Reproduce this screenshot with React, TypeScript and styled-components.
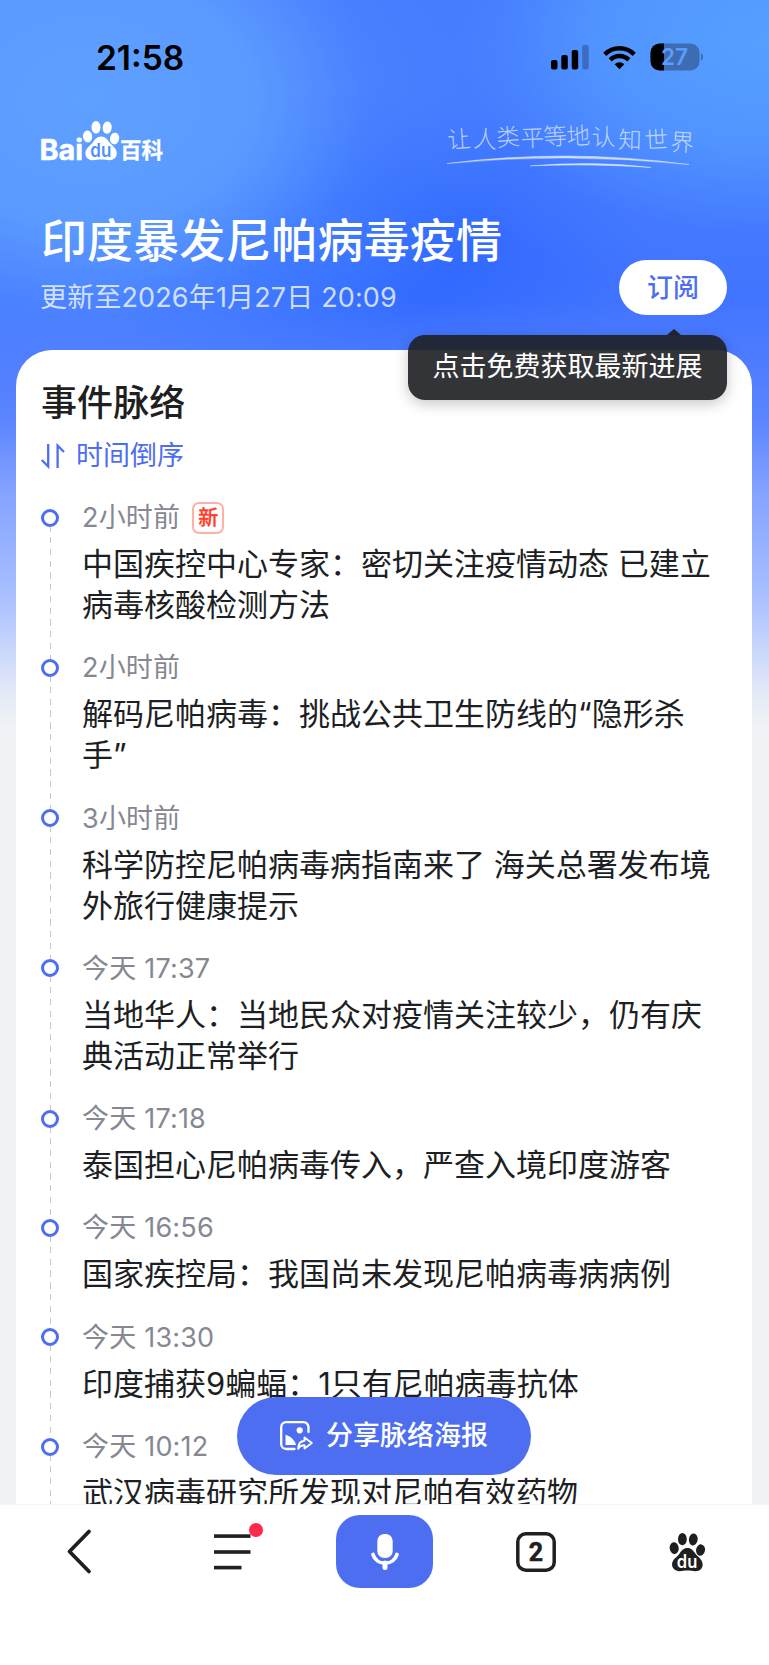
import React from "react";
import styled, { createGlobalStyle } from "styled-components";

const cjk = `Inter, "Noto Sans CJK SC", sans-serif`;
const blue = "#4e6ef2";

const GlobalStyle = createGlobalStyle`
  *, *::before, *::after { box-sizing: border-box; }
  body { margin: 0; background: #fff; font-family: ${cjk}; }
  h1, h2, p, ul { margin: 0; padding: 0; font-weight: inherit; }
  button { border: 0; padding: 0; background: none; font: inherit; color: inherit; }
  svg { display: block; overflow: visible; }
`;

const Screen = styled.div`
  width: 769px;
  height: 1665px;
  overflow: hidden;
  display: flex;
  flex-direction: column;
`;

const Page = styled.main`
  flex: none;
  height: 1504px;
  overflow: hidden;
  display: flex;
  flex-direction: column;
  background:
    linear-gradient(180deg, rgba(91, 132, 255, 0) 300px, rgba(91, 132, 255, 1) 420px, #86a4ff 495px, #a6bdff 590px, #ccd9fb 655px, #e5eaf7 695px, #f1f2f5 728px),
    radial-gradient(430px 330px at 90px 100px, rgba(94, 160, 255, 1) 0%, rgba(92, 156, 255, 0.95) 38%, rgba(80, 140, 255, 0.5) 66%, rgba(66, 120, 255, 0) 100%),
    radial-gradient(420px 260px at 769px 40px, rgba(86, 160, 255, 1) 0%, rgba(84, 154, 255, 0.85) 40%, rgba(72, 130, 255, 0.35) 75%, rgba(64, 115, 255, 0) 100%),
    radial-gradient(300px 160px at 350px 250px, #326aff 0%, #3069ff 30%, rgba(50, 106, 255, 0) 100%),
    #4174ff;
`;

const StatusBar = styled.div`
  flex: none;
  height: 114px;
  padding: 0 65px 0 96px;
  display: flex;
  align-items: center;
  justify-content: space-between;
  color: #000;
`;

const Clock = styled.span`
  padding-top: 1px;
  font-size: 33.5px;
  font-weight: 600;
`;

const StatusIcons = styled.div`
  display: flex;
  align-items: center;
  gap: 14px;
`;

const Brand = styled.div`
  flex: none;
  height: 62px;
  padding: 0 73px 0 40px;
  display: flex;
  align-items: flex-start;
  justify-content: space-between;
`;

const Hero = styled.header`
  flex: none;
  height: 174px;
  padding: 34px 42px 0 41px;
  display: flex;
  justify-content: space-between;
  color: #fff;
`;

const Title = styled.h1`
  font-size: 46px;
  line-height: 60px;
  font-weight: 500;
  letter-spacing: 0.1px;
`;

const Updated = styled.p`
  margin-top: 10px;
  margin-left: -1px;
  font-size: 27px;
  line-height: 36px;
  letter-spacing: 0.15px;
  color: rgba(255, 255, 255, 0.75);
`;

const SubscribeWrap = styled.div`
  position: relative;
  margin-top: 50px;
  width: 108px;
  height: 55px;
`;

const Subscribe = styled.button`
  width: 108px;
  height: 55px;
  border-radius: 28px;
  background: #fff;
  color: ${blue};
  font-size: 26px;
  line-height: 53px;
  font-weight: 500;
`;

const Tooltip = styled.div`
  position: absolute;
  z-index: 2;
  top: 75px;
  right: 0;
  width: 319px;
  height: 65px;
  border-radius: 17px;
  background: rgba(31, 32, 36, 0.91);
  box-shadow: 0 4px 14px rgba(0, 0, 0, 0.22);
  color: #fff;
  font-size: 27px;
  line-height: 64px;
  text-align: center;
  &::before {
    content: "";
    position: absolute;
    top: -6px;
    right: 46px;
    border: 7px solid transparent;
    border-top: 0;
    border-bottom: 6px solid #20232d;
  }
`;

const Card = styled.section`
  flex: none;
  height: 1200px;
  margin: 0 17px 0 16px;
  padding: 31px 25px 0;
  border-radius: 36px 36px 0 0;
  background: #fff;
`;

const CardTitle = styled.h2`
  font-size: 36px;
  line-height: 44px;
  font-weight: 500;
  letter-spacing: 0.1px;
  color: #1f1f1f;
`;

const Sort = styled.div`
  margin-top: 11px;
  height: 40px;
  display: flex;
  align-items: center;
  gap: 11px;
  color: ${blue};
  font-size: 27px;
  line-height: 38px;
`;

const Timeline = styled.ul`
  margin-top: 22.5px;
  list-style: none;
`;

const Item = styled.li`
  display: grid;
  grid-template-columns: 18px 1fr;
  column-gap: 23px;
`;

const Rail = styled.div`
  padding-top: 10px;
  display: flex;
  flex-direction: column;
  align-items: center;
  &::before {
    content: "";
    width: 18px;
    height: 18px;
    border: 3px solid ${blue};
    border-radius: 50%;
  }
  &::after {
    content: "";
    flex: 1;
    width: 1px;
    margin: 0 0 -10px 1px;
    background: repeating-linear-gradient(180deg, #c8c8cc 0 4.6px, transparent 4.6px 10px, #c8c8cc 10px 11.75px);
  }
`;

const Entry = styled.div`
  padding-bottom: 23.8px;
`;

const Time = styled.div`
  height: 38px;
  display: flex;
  align-items: center;
  gap: 12px;
  color: #858892;
  font-size: 27px;
  line-height: 39px;
  letter-spacing: 0.2px;
`;

const NewTag = styled.span`
  width: 32px;
  height: 32px;
  border: 2px solid #ffb0a8;
  border-radius: 7px;
  color: #ff3b26;
  font-size: 20px;
  line-height: 28px;
  font-weight: 500;
  letter-spacing: 0;
  text-align: center;
  -webkit-text-stroke: 0.3px #ff3b26;
`;

const Headline = styled.p`
  margin-top: 6.5px;
  color: #1d1f24;
  font-size: 31px;
  line-height: 41px;
  white-space: pre;
`;

const BottomBar = styled.nav`
  position: relative;
  flex: none;
  height: 161px;
  padding-top: 10px;
  border-top: 1px solid #f5f5f6;
  background: #fff;
  display: grid;
  grid-template-columns: 158px 148px 157px 146px 157px;
  align-items: start;
  justify-items: center;
`;

const NavItem = styled.button`
  position: relative;
  height: 73px;
  display: flex;
  align-items: center;
  justify-content: center;
`;

const RedDot = styled.span`
  position: absolute;
  top: 8px;
  right: -12px;
  width: 14px;
  height: 14px;
  border-radius: 50%;
  background: #ff2849;
`;

const Mic = styled(NavItem)`
  width: 97px;
  border-radius: 24px;
  background: ${blue};
`;

const Share = styled.button`
  position: absolute;
  top: -108px;
  left: 237px;
  width: 294px;
  height: 78px;
  border-radius: 39px;
  background: ${blue};
  color: #fff;
  display: flex;
  align-items: center;
  justify-content: center;
  gap: 13px;
  font-size: 27px;
  line-height: 40px;
  font-weight: 500;
  svg { margin-top: -1px; }
`;

const items: { time: string; text: string; fresh?: boolean }[] = [
  { time: "2小时前", text: "中国疾控中心专家：密切关注疫情动态 已建立\n病毒核酸检测方法", fresh: true },
  { time: "2小时前", text: "解码尼帕病毒：挑战公共卫生防线的“隐形杀\n手”" },
  { time: "3小时前", text: "科学防控尼帕病毒病指南来了 海关总署发布境\n外旅行健康提示" },
  { time: "今天 17:37", text: "当地华人：当地民众对疫情关注较少，仍有庆\n典活动正常举行" },
  { time: "今天 17:18", text: "泰国担心尼帕病毒传入，严查入境印度游客" },
  { time: "今天 16:56", text: "国家疾控局：我国尚未发现尼帕病毒病病例" },
  { time: "今天 13:30", text: "印度捕获9蝙蝠：1只有尼帕病毒抗体" },
  { time: "今天 10:12", text: "武汉病毒研究所发现对尼帕有效药物" },
];

const Signal = () => (
  <svg width="38" height="25" viewBox="0 0 38 25">
    <rect x="0" y="15" width="6.5" height="9.5" rx="2" />
    <rect x="10.3" y="10" width="6.5" height="14.5" rx="2" />
    <rect x="20.7" y="5" width="6.5" height="19.5" rx="2" />
    <rect x="31.2" y="0" width="6.5" height="24.5" rx="2" opacity="0.25" />
  </svg>
);

const Wifi = () => (
  <svg width="33" height="25" viewBox="0 0 34 25" fill="none" stroke="#000" strokeWidth="4.6">
    <path d="M1.8 9.3a21.5 21.5 0 0 1 30.4 0" />
    <path d="M7.4 15a13.6 13.6 0 0 1 19.2 0" />
    <path d="M17 24.6l-5-5.1a7.2 7.2 0 0 1 10 0z" fill="#000" stroke="none" />
  </svg>
);

const Battery = () => (
  <svg width="54" height="28" viewBox="0 0 54 28">
    <defs>
      <clipPath id="charge"><rect x="0" y="0" width="14" height="28" /></clipPath>
    </defs>
    <rect x="0.5" y="0.5" width="49" height="27" rx="9" fill="#3e6cb3" />
    <rect x="0.5" y="0.5" width="49" height="27" rx="9" clipPath="url(#charge)" />
    <path d="M51 10.5c2.8 0.8 2.8 6.2 0 7z" fill="#3e6cb3" />
    <text x="24.5" y="21.8" textAnchor="middle" fontFamily="Inter" fontSize="22.5" fontWeight="600" fill="#5b9dfd">27</text>
  </svg>
);

const Paw = ({ fill, ink }: { fill: string; ink: string }) => (
  <g fill={fill}>
    <ellipse cx="4.6" cy="15.5" rx="4.6" ry="6" transform="rotate(-8 4.6 15.5)" />
    <ellipse cx="13" cy="6.3" rx="4.5" ry="6.3" />
    <ellipse cx="24.2" cy="6.6" rx="4.5" ry="6.2" transform="rotate(8 24.2 6.6)" />
    <ellipse cx="31.6" cy="17.5" rx="4.6" ry="5.9" transform="rotate(10 31.6 17.5)" />
    <path d="M18.2 15.5c4 0 6 2.8 8 5.500 2.600 3.400 7.600 6 7.600 11.300 0 4.300-3.200 6.900-7.200 6.900-3 0-5.200-.6-8.400-.6s-5.300.6-8.200.6c-4.200 0-7.600-2.600-7.600-7 0-5 4.900-7.400 7.600-11 2.100-2.900 4.200-5.700 8.200-5.700z" />
    <text x="17.8" y="36" textAnchor="middle" fontFamily="Inter" fontSize="18.5" fontWeight="600" textLength="21" lengthAdjust="spacingAndGlyphs" fill={ink}>du</text>
  </g>
);

const Logo = () => (
  <svg width="124" height="50" viewBox="0 0 124 50" fill="#fff">
    <text x="-0.5" y="45.5" fontFamily="Inter" fontSize="28" fontWeight="700" stroke="#fff" strokeWidth="0.5" textLength="43.5" lengthAdjust="spacingAndGlyphs">Bai</text>
    <g transform="translate(43 7)"><Paw fill="#fff" ink="#4e90ff" /></g>
    <text x="80" y="43.8" fontFamily="Noto Sans CJK SC" fontSize="21.5" fontWeight="700" stroke="#fff" strokeWidth="0.3">百科</text>
  </svg>
);

const Slogan = () => (
  <svg width="250" height="60" viewBox="0 0 250 60" fill="none">
    <text
      x="2 27 51 75 98 121 146 172 199 224"
      y="34.5 33 32.5 33 31.5 31 32 34 35 36"
      rotate="-4 3 -5 -2 -4 -3 -2 2 -3 4"
      fontFamily="Noto Sans CJK SC"
      fontWeight="300"
      fontSize="23.5"
      fill="#fff"
      fillOpacity="0.65"
    >
      让人类平等地认知世界
    </text>
    <path d="M1 49.5Q120 34 243 50.5Q120 38 1 49.5z" fill="#fff" fillOpacity="0.7" stroke="#fff" strokeOpacity="0.4" strokeWidth="0.8" />
    <path d="M84 51.8Q150 46.5 205 53.5Q150 49.5 84 51.8z" fill="#fff" fillOpacity="0.7" stroke="#fff" strokeOpacity="0.4" strokeWidth="0.8" />
  </svg>
);

const SortIcon = () => (
  <svg width="24" height="26" viewBox="0 0 24 26" fill="none" stroke={blue} strokeWidth="2.3">
    <path d="M0.7 17l6.500 6.500V1" />
    <path d="M16.6 25V2.500L23 9" />
  </svg>
);

const PosterIcon = () => (
  <svg width="33" height="30" viewBox="0 0 33 30" fill="none" stroke="#fff" strokeWidth="2.3" strokeLinejoin="round" strokeLinecap="round">
    <path d="M14.500 28H6.200a5 5 0 0 1-5-5V6.200a5 5 0 0 1 5-5h17.300a5 5 0 0 1 5 5V11" />
    <circle cx="19.700" cy="9.300" r="3.100" fill="#fff" stroke="none" />
    <path d="M5.500 13.800c5 1.700 9.200 5 10.600 10.200H5.500z" fill="#fff" stroke="none" />
    <path d="M24.500 16.500l7.300 5.500-7.300 5.500v-3.300c-3 0-5 1-6.300 3.500 0-4.800 2.100-7.600 6.300-8z" strokeWidth="1.9" />
  </svg>
);

const BackIcon = () => (
  <svg width="24" height="43" viewBox="0 0 24 43" fill="none" stroke="#1f2024" strokeWidth="3.8">
    <path d="M22 1.500L2.500 21.500L22 41.500" strokeLinecap="round" strokeLinejoin="round" />
  </svg>
);

const MenuIcon = () => (
  <svg width="37" height="36" viewBox="0 0 37 36" fill="#1f2024">
    <rect width="36.5" height="3.6" y="0.3" />
    <rect width="36.5" height="3.6" y="16.2" />
    <rect width="27.5" height="3.6" y="31.8" />
  </svg>
);

const MicIcon = () => (
  <svg width="30" height="36" viewBox="0 0 30 36" fill="none">
    <rect x="7.3" y="0" width="15.4" height="24" rx="7" fill="#fff" />
    <path d="M3 20.500c1.700 5.300 6.300 8.700 12 8.700s10.300-3.400 12-8.700" stroke="#fff" strokeWidth="3.8" strokeLinecap="round" />
    <path d="M15 29v4.500" stroke="#fff" strokeWidth="5" strokeLinecap="round" />
  </svg>
);

const TabsIcon = () => (
  <svg width="40" height="40" viewBox="0 0 40 40">
    <rect x="1.8" y="1.8" width="36.4" height="36.4" rx="8" fill="none" stroke="#1f2024" strokeWidth="3.5" />
    <text x="20" y="29" textAnchor="middle" fontFamily="Roboto" fontWeight="700" fontSize="25" fill="#1f2024" stroke="#1f2024" strokeWidth="0.5">2</text>
  </svg>
);

const PawIcon = () => (
  <svg width="37" height="38" viewBox="0 0 36.5 39">
    <Paw fill="#1f1f1f" ink="#fff" />
  </svg>
);

export default function App() {
  return (
    <>
      <GlobalStyle />
      <Screen>
        <Page>
          <StatusBar>
            <Clock>21:58</Clock>
            <StatusIcons>
              <Signal />
              <Wifi />
              <Battery />
            </StatusIcons>
          </StatusBar>
          <Brand>
            <Logo />
            <Slogan />
          </Brand>
          <Hero>
            <div>
              <Title>印度暴发尼帕病毒疫情</Title>
              <Updated>更新至2026年1月27日 20:09</Updated>
            </div>
            <SubscribeWrap>
              <Subscribe>订阅</Subscribe>
              <Tooltip>点击免费获取最新进展</Tooltip>
            </SubscribeWrap>
          </Hero>
          <Card>
            <CardTitle>事件脉络</CardTitle>
            <Sort>
              <SortIcon />
              时间倒序
            </Sort>
            <Timeline>
              {items.map((item) => (
                <Item key={item.text}>
                  <Rail />
                  <Entry>
                    <Time>
                      {item.time}
                      {item.fresh && <NewTag>新</NewTag>}
                    </Time>
                    <Headline>{item.text}</Headline>
                  </Entry>
                </Item>
              ))}
            </Timeline>
          </Card>
        </Page>
        <BottomBar>
          <Share>
            <PosterIcon />
            <span>分享脉络海报</span>
          </Share>
          <NavItem><BackIcon /></NavItem>
          <NavItem>
            <MenuIcon />
            <RedDot />
          </NavItem>
          <Mic><MicIcon /></Mic>
          <NavItem><TabsIcon /></NavItem>
          <NavItem><PawIcon /></NavItem>
        </BottomBar>
      </Screen>
    </>
  );
}
